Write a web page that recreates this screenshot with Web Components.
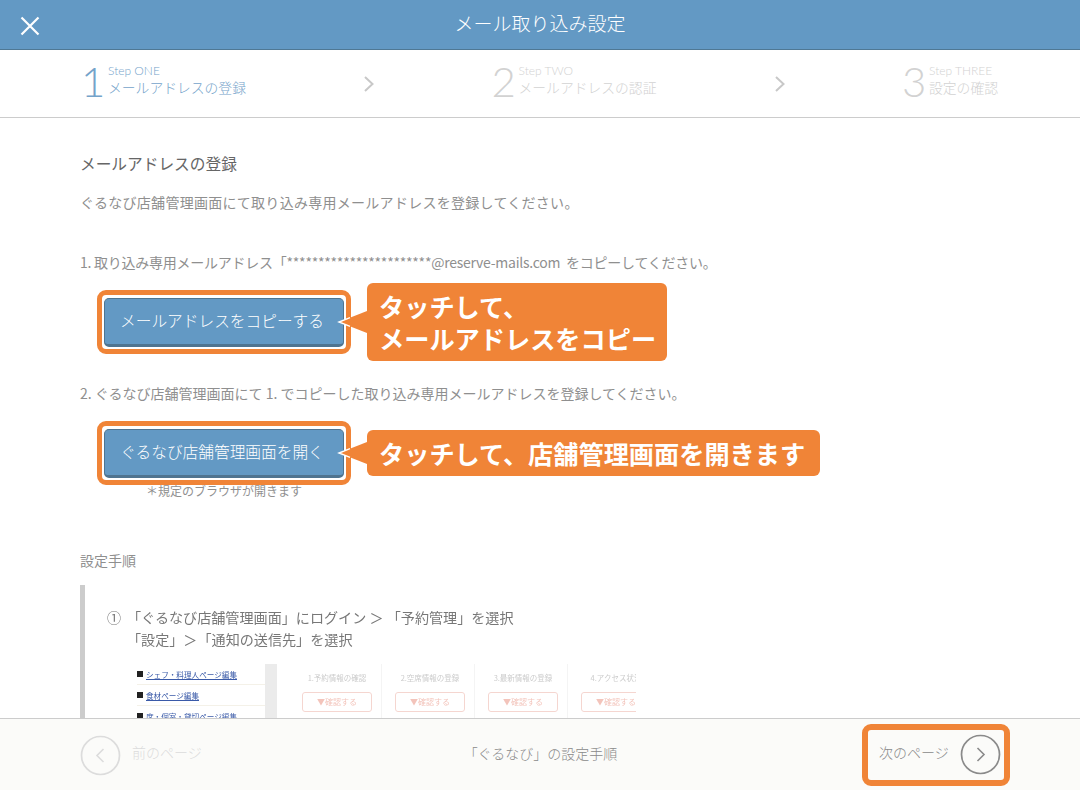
<!DOCTYPE html>
<html lang="ja">
<head>
<meta charset="utf-8">
<title>メール取り込み設定</title>
<style>
  html, body { margin: 0; height: 100%; background: #fff; overflow: hidden; }
  body { font-family: "Noto Sans CJK JP", "Noto Sans", sans-serif; }
</style>
</head>
<body>
<settings-screen>
  <app-header slot="header" title="メール取り込み設定"></app-header>
  <step-bar slot="steps">
    <step-item num="1" en="Step ONE" active>メールアドレスの登録</step-item>
    <step-item num="2" en="Step TWO" arrow>メールアドレスの認証</step-item>
    <step-item num="3" en="Step THREE" arrow>設定の確認</step-item>
  </step-bar>
  <div>
    <section-title>メールアドレスの登録</section-title>
    <body-line top="19" spacing="0.28">ぐるなび店舗管理画面にて取り込み専用メールアドレスを登録してください。</body-line>
    <body-line top="42" spacing="-0.25">1. 取り込み専用メールアドレス「***********************@reserve-mails.com&nbsp;&nbsp;をコピーしてください。</body-line>
    <action-row top="19" callout-top="-7" callout-height="78" callout-width="300">
      メールアドレスをコピーする
      <span slot="callout">タッチして、<br>メールアドレスをコピー</span>
    </action-row>
    <body-line top="30">2. ぐるなび店舗管理画面にて 1. でコピーした取り込み専用メールアドレスを登録してください。</body-line>
    <action-row top="19" callout-top="9" callout-height="46" callout-width="453">
      ぐるなび店舗管理画面を開く
      <span slot="callout">タッチして、店舗管理画面を開きます</span>
    </action-row>
    <note-line>＊規定のブラウザが開きます</note-line>
    <body-line top="52">設定手順</body-line>
    <guide-panel></guide-panel>
  </div>
  <page-footer slot="footer"></page-footer>
</settings-screen>

<script>
// screen shell
class SettingsScreen extends HTMLElement {
  constructor() {
    super();
    this.attachShadow({ mode: 'open' });
    this.shadowRoot.innerHTML = `
      <style>
        :host { display: flex; flex-direction: column; width: 1080px; height: 790px; overflow: hidden; }
        main { flex: 1; min-height: 0; overflow: hidden; padding: 36px 80px 0; }
      </style>
      <slot name="header"></slot>
      <slot name="steps"></slot>
      <main><slot></slot></main>
      <slot name="footer"></slot>
    `;
  }
}
customElements.define('settings-screen', SettingsScreen);

class AppHeader extends HTMLElement {
  constructor() {
    super();
    this.attachShadow({ mode: 'open' });
    this.shadowRoot.innerHTML = `
      <style>
        :host { display: flex; align-items: center; justify-content: center; position: relative; height: 49px; flex: none;
          background: #6399c4; border-bottom: 1px solid #4f7894; color: #fff; font-size: 19px; font-weight: 300; }
        svg { position: absolute; left: 20px; top: 16px; }
        span { margin-top: -5px; }
      </style>
      <svg width="20" height="20" viewBox="0 0 20 20"><path d="M1.5 1.5 18.5 18.5M18.5 1.5 1.5 18.5" stroke="#fff" stroke-width="2.2" fill="none"/></svg>
      <span>${this.getAttribute('title')}</span>
    `;
  }
}
customElements.define('app-header', AppHeader);

class StepBar extends HTMLElement {
  constructor() {
    super();
    this.attachShadow({ mode: 'open' });
    this.shadowRoot.innerHTML = `
      <style>
        :host { display: flex; height: 67px; flex: none; padding-left: 81px; border-bottom: 1px solid #ccc; }
      </style>
      <slot></slot>
    `;
  }
}
customElements.define('step-bar', StepBar);

class StepItem extends HTMLElement {
  constructor() {
    super();
    this.attachShadow({ mode: 'open' });
    const arrow = this.hasAttribute('arrow') ? `
      <svg class="chev" width="12" height="18" viewBox="0 0 12 18"><path d="M2 2 9.5 9 2 16" stroke="#c8c8c8" stroke-width="2" fill="none"/></svg>` : '';
    this.shadowRoot.innerHTML = `
      <style>
        :host { display: flex; align-items: center; color: #d2d2d2; }
        :host([active]) { color: #74a3ca; }
        .chev { flex: none; margin-right: 116.5px; margin-top: 1px; }
        .num { font-family: Lato, "Noto Sans", sans-serif; font-weight: 300; font-size: 42px; line-height: 1; width: 27px; margin-top: -5px; }
        .txt { display: flex; flex-direction: column; width: 255px; margin-top: -8px; }
        .en { font-family: Lato, "Noto Sans", sans-serif; font-weight: 300; font-size: 12px; line-height: 15px; }
        .ja { font-size: 13.8px; font-weight: 300; line-height: 19px; }
      </style>
      ${arrow}
      <span class="num">${this.getAttribute('num')}</span>
      <span class="txt"><span class="en">${this.getAttribute('en')}</span><span class="ja"><slot></slot></span></span>
    `;
  }
}
customElements.define('step-item', StepItem);

class SectionTitle extends HTMLElement {
  constructor() {
    super();
    this.attachShadow({ mode: 'open' });
    this.shadowRoot.innerHTML = `
      <style>:host { display: block; font-size: 15.7px; line-height: 20px; color: #666; }</style>
      <slot></slot>
    `;
  }
}
customElements.define('section-title', SectionTitle);

class BodyLine extends HTMLElement {
  constructor() {
    super();
    this.attachShadow({ mode: 'open' });
    this.shadowRoot.innerHTML = `
      <style>:host { display: block; font-size: 14px; line-height: 18px; color: #8f8f8f; white-space: nowrap;
        margin-top: var(--top, 0); letter-spacing: var(--spacing, 0); }</style>
      <slot></slot>
    `;
    this.style.setProperty('--top', (this.getAttribute('top') || 0) + 'px');
    this.style.setProperty('--spacing', (this.getAttribute('spacing') || 0) + 'px');
  }
}
customElements.define('body-line', BodyLine);

// blue button in an orange highlight frame, with a callout bubble to the right
class ActionRow extends HTMLElement {
  constructor() {
    super();
    this.attachShadow({ mode: 'open' });
    const top = this.getAttribute('callout-top');
    const h = this.getAttribute('callout-height');
    const w = this.getAttribute('callout-width');
    this.shadowRoot.innerHTML = `
      <style>
        :host { display: block; position: relative; width: 254px; height: 64px; margin-left: 17px; margin-top: ${this.getAttribute('top')}px; }
        .frame { box-sizing: border-box; width: 100%; height: 100%; border: 5px solid #f08437; border-radius: 9px; background: #fff; padding: 3px 2px 2px; }
        button { display: block; width: 240px; height: 49px; padding: 0 4px 2px 0; margin: 0; background: #6399c4; color: #fff;
          font: 300 15.7px "Noto Sans CJK JP", sans-serif; border: 1px solid #4f7490; border-bottom-width: 3px; border-radius: 5px; }
        .bubble { position: absolute; left: 270px; top: ${top}px; box-sizing: border-box; width: ${w}px; height: ${h}px;
          display: flex; align-items: center; padding: 0 12px; background: #f08437; border-radius: 6px;
          color: #fff; font-size: 25.2px; font-weight: 700; line-height: 32px; white-space: nowrap; }
        .tail { position: absolute; left: 240px; top: 21px; }
      </style>
      <div class="frame"><button><slot></slot></button></div>
      <svg class="tail" width="31" height="22" viewBox="0 0 31 22">
        <path d="M30 0 2 11 30 22Z" fill="#f08437"/>
        <path d="M13 6.7 2 11 13 15.3" fill="none" stroke="#fff" stroke-width="1.4"/>
      </svg>
      <div class="bubble"><slot name="callout"></slot></div>
    `;
  }
}
customElements.define('action-row', ActionRow);

class NoteLine extends HTMLElement {
  constructor() {
    super();
    this.attachShadow({ mode: 'open' });
    this.shadowRoot.innerHTML = `
      <style>:host { display: block; width: 254px; margin-left: 17px; margin-top: -2px; text-align: center; font-size: 12px; line-height: 16px; color: #8f8f8f; }</style>
      <slot></slot>
    `;
  }
}
customElements.define('note-line', NoteLine);

// the blurred screenshot embedded in the guide
class GuidePanel extends HTMLElement {
  constructor() {
    super();
    this.attachShadow({ mode: 'open' });
    const cols = ['1.予約情報の確認', '2.空席情報の登録', '3.最新情報の登録', '4.アクセス状況'];
    this.shadowRoot.innerHTML = `
      <style>
        :host { display: block; margin-top: 16px; border-left: 5px solid #ccc; padding: 21px 0 0 22px; height: 200px; }
        .head { display: grid; grid-template-columns: 20px auto; font-size: 14.1px; line-height: 22px; color: #777; white-space: nowrap; filter: blur(0.5px); }
        .shot { display: flex; margin: 14px 0 0 24px; width: 505px; height: 84px; overflow: hidden; filter: blur(0.7px); }
        .side { flex: none; box-sizing: border-box; width: 146px; border-right: 12px solid #ebebeb; padding-left: 6px; }
        .side div { display: flex; align-items: center; gap: 3px; height: 20px; border-bottom: 1px solid #f4f1e8; font-size: 7.6px; color: #3a5aa8; text-decoration: underline; white-space: nowrap; }
        .side i { width: 6px; height: 6px; background: #222; flex: none; }
        .col { flex: none; box-sizing: border-box; width: 93px; height: 84px; border-right: 1px solid #f4f4f4; padding: 8px 0 0 13px; font-size: 7.5px; line-height: 12px; color: #ccc; white-space: nowrap; }
        .col span { display: block; width: 70px; text-align: center; }
        .col b { display: block; margin-top: 8px; width: 68px; height: 18px; border: 1px solid #f5d6d0; border-radius: 3px; color: #f3c4bb; font-weight: 400; font-size: 8px; line-height: 18px; text-align: center; }
        .gap { width: 12px; flex: none; }
      </style>
      <div class="head">
        <span>①</span><span>「ぐるなび店舗管理画面」にログイン ＞ 「予約管理」を選択</span>
        <span></span><span>「設定」＞「通知の送信先」を選択</span>
      </div>
      <div class="shot">
        <div class="side">
          <div><i></i>シェフ・料理人ページ編集</div>
          <div><i></i>食材ページ編集</div>
          <div><i></i>席・個室・貸切ページ編集</div>
        </div>
        <div class="gap"></div>
        ${cols.map(c => `<div class="col"><span>${c}</span><b>▼確認する</b></div>`).join('')}
      </div>
    `;
  }
}
customElements.define('guide-panel', GuidePanel);

class PageFooter extends HTMLElement {
  constructor() {
    super();
    this.attachShadow({ mode: 'open' });
    this.shadowRoot.innerHTML = `
      <style>
        :host { display: flex; align-items: center; position: relative; flex: none; height: 71px; padding: 0 70px 0 80px;
          background: #fbfbf9; border-top: 1px solid #ccc; font-size: 14px; font-weight: 300; }
        .prev { display: flex; align-items: center; gap: 11px; color: #dcdcdc; width: 382px; margin-top: 2px; }
        .prev span { margin-top: -8px; }
        .mid { width: 157px; text-align: center; color: #8a8a8a; white-space: nowrap; margin-top: -4px; }
        .next { box-sizing: border-box; display: flex; align-items: center; gap: 11px; margin-left: auto; width: 148px; height: 62px; padding: 0 4px 0 11px;
          border: 6px solid #f08437; border-radius: 9px; color: #8a8a8a; white-space: nowrap; }
        .next span { margin-top: -6px; }
        svg { flex: none; display: block; }
      </style>
      <div class="prev">
        <svg width="41" height="41" viewBox="0 0 41 41"><circle cx="20.5" cy="20.5" r="19" fill="none" stroke="#dcdcdc" stroke-width="1.7"/><path d="M23.5 14 17 20.5 23.5 27" fill="none" stroke="#dcdcdc" stroke-width="1.6"/></svg>
        <span>前のページ</span>
      </div>
      <div class="mid">「ぐるなび」の設定手順</div>
      <div class="next">
        <span>次のページ</span>
        <svg width="41" height="41" viewBox="0 0 41 41"><circle cx="20.5" cy="20.5" r="19" fill="none" stroke="#8a8a8a" stroke-width="1.7"/><path d="M17.5 14 24 20.5 17.5 27" fill="none" stroke="#8a8a8a" stroke-width="1.6"/></svg>
      </div>
    `;
  }
}
customElements.define('page-footer', PageFooter);
</script>
</body>
</html>
